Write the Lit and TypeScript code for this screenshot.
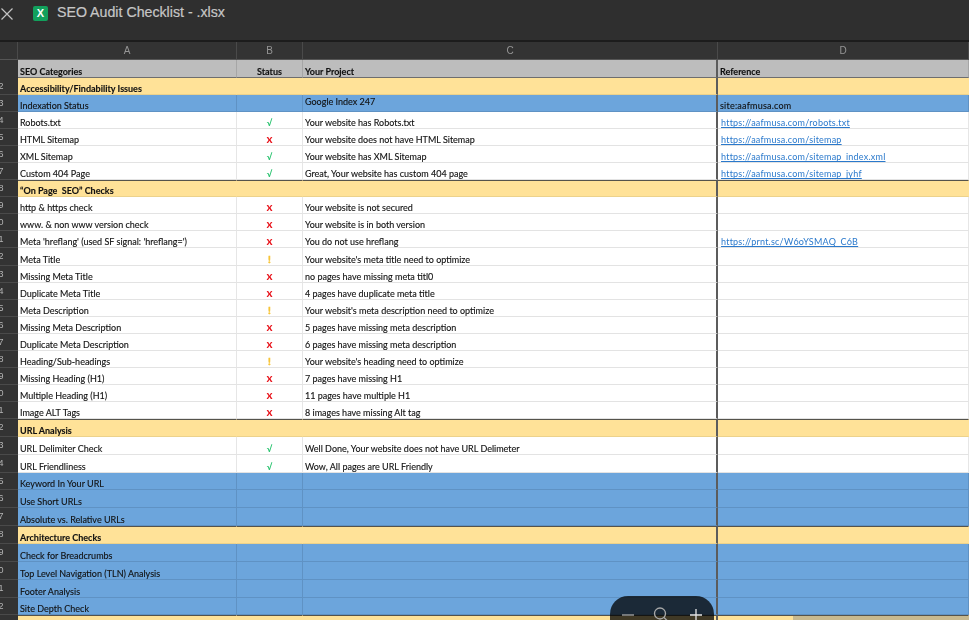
import {html, css, LitElement} from 'lit';
import {customElement} from 'lit/decorators.js';

type Kind = 'section' | 'blue' | 'plain';
type Mark = '' | 'ok' | 'bad' | 'warn';

interface Row {
	kind: Kind;
	a: string;
	mark?: Mark;
	c?: string;
	d?: string;
	link?: boolean;
	heavy?: boolean;
	tall?: boolean;
}

const glyph: Record<string, string> = {ok: '√', bad: 'x', warn: '!'};

const rows: Row[] = [
	{kind: 'section', a: 'Accessibility/Findability Issues'},
	{kind: 'blue', a: 'Indexation Status', c: 'Google Index 247', d: 'site:aafmusa.com'},
	{kind: 'plain', a: 'Robots.txt', mark: 'ok', c: 'Your website has Robots.txt', d: 'https://aafmusa.com/robots.txt', link: true},
	{kind: 'plain', a: 'HTML Sitemap', mark: 'bad', c: 'Your website does not have HTML Sitemap', d: 'https://aafmusa.com/sitemap', link: true},
	{kind: 'plain', a: 'XML Sitemap', mark: 'ok', c: 'Your website has XML Sitemap', d: 'https://aafmusa.com/sitemap_index.xml', link: true},
	{kind: 'plain', a: 'Custom 404 Page', mark: 'ok', c: 'Great, Your website has custom 404 page', d: 'https://aafmusa.com/sitemap_jyhf', link: true},
	{kind: 'section', a: '“On Page  SEO” Checks', heavy: true},
	{kind: 'plain', a: 'http & https check', mark: 'bad', c: 'Your website is not secured'},
	{kind: 'plain', a: 'www. & non www version check', mark: 'bad', c: 'Your website is in both version'},
	{kind: 'plain', a: "Meta 'hreflang' (used SF signal: 'hreflang=')", mark: 'bad', c: 'You do not use hreflang', d: 'https://prnt.sc/W6oYSMAQ_C6B', link: true},
	{kind: 'plain', a: 'Meta Title', mark: 'warn', c: "Your website's meta title need to optimize"},
	{kind: 'plain', a: 'Missing Meta Title', mark: 'bad', c: 'no pages have missing meta titl0'},
	{kind: 'plain', a: 'Duplicate Meta Title', mark: 'bad', c: '4 pages have duplicate meta title'},
	{kind: 'plain', a: 'Meta Description', mark: 'warn', c: "Your websit's meta description need to optimize"},
	{kind: 'plain', a: 'Missing Meta Description', mark: 'bad', c: '5 pages have missing meta description'},
	{kind: 'plain', a: 'Duplicate Meta Description', mark: 'bad', c: '6 pages have missing meta description'},
	{kind: 'plain', a: 'Heading/Sub-headings', mark: 'warn', c: "Your website's heading need to optimize"},
	{kind: 'plain', a: 'Missing Heading (H1)', mark: 'bad', c: '7 pages have missing H1'},
	{kind: 'plain', a: 'Multiple Heading (H1)', mark: 'bad', c: '11 pages have multiple H1'},
	{kind: 'plain', a: 'Image ALT Tags', mark: 'bad', c: '8 images have missing Alt tag'},
	{kind: 'section', a: 'URL Analysis', heavy: true, tall: true},
	{kind: 'plain', a: 'URL Delimiter Check', mark: 'ok', c: 'Well Done, Your website does not have URL Delimeter', tall: true},
	{kind: 'plain', a: 'URL Friendliness', mark: 'ok', c: 'Wow, All pages are URL Friendly', tall: true},
	{kind: 'blue', a: 'Keyword In Your URL', tall: true},
	{kind: 'blue', a: 'Use Short URLs', tall: true},
	{kind: 'blue', a: 'Absolute vs. Relative URLs', tall: true},
	{kind: 'section', a: 'Architecture Checks', heavy: true, tall: true},
	{kind: 'blue', a: 'Check for Breadcrumbs', tall: true},
	{kind: 'blue', a: 'Top Level Navigation (TLN) Analysis', tall: true},
	{kind: 'blue', a: 'Footer Analysis', tall: true},
	{kind: 'blue', a: 'Site Depth Check', tall: true},
	{kind: 'section', a: '', heavy: true},
];

@customElement('app-root')
export class AppRoot extends LitElement {
	static styles = css`
		:host {
			display: block;
			width: 969px;
			height: 620px;
			overflow: hidden;
			position: relative;
			background: #333;
			font-family: Lato, "Liberation Sans", sans-serif;
		}

		.titlebar {
			height: 42px;
			box-sizing: border-box;
			background: #2f2f2f;
			border-bottom: 2px solid #1c1c1c;
			display: flex;
			align-items: flex-start;
			padding: 4px 0 0 1px;
		}
		.close { width: 12px; height: 12px; margin-top: 4px; }
		.xl {
			width: 15px;
			height: 15px;
			margin: 2px 9px 0 20px;
			border-radius: 2px;
			background: #12a05c;
			color: #fff;
			font: bold 11px/15px "Liberation Sans", sans-serif;
			text-align: center;
		}
		.name {
			font: 14.2px/16px "Liberation Sans", sans-serif;
			-webkit-text-stroke: 0.2px #c6c6c6;
			color: #c6c6c6;
		}

		.sheet { filter: blur(0.4px); }
		.row {
			display: grid;
			grid-template-columns: 18px 219px 66px 415px 1fr;
			height: 17.05px;
			box-sizing: border-box;
			font-size: 9px;
			color: #111;
			-webkit-text-stroke: 0.12px #111;
		}
		.row.tall { height: 17.87px; }
		.row.letters {
			height: 18px;
			background: #333;
			color: #969696;
			-webkit-text-stroke: 0;
			font: 10px "Liberation Sans", sans-serif;
		}
		.letters > div {
			display: flex;
			align-items: center;
			justify-content: center;
			padding-bottom: 1px;
			box-sizing: border-box;
			border-right: 1px solid #4a4a4a;
			border-bottom: 1px solid #555;
		}
		.row.head { height: 18px; background: #bdbdbd; font-weight: 700; }
		.row.head > .cell { border-bottom: 1px solid #6e6e6e; border-right-color: #a6a6a6; padding-bottom: 0; }

		.cell {
			display: flex;
			align-items: flex-end;
			padding: 0 0 0 2px;
			white-space: pre;
			overflow: hidden;
			border-right: 1px solid #e6e6e6;
			border-bottom: 1px solid #e3e3e3;
			box-sizing: border-box;
			min-width: 0;
		}
		.cell.b { padding-left: 0; justify-content: center; font-weight: 700; }
		.cell.b.ok { font-size: 9px; -webkit-text-stroke: 0; }
		.cell.b.bad { font-size: 11.5px; line-height: 12px; -webkit-text-stroke: 0; }
		.cell.b.warn { font-size: 10px; -webkit-text-stroke: 0.5px #f7c436; }
		.cell.c { border-right: 2px solid #5c5c5c !important; }
		.cell.top { align-items: flex-start; padding-top: 1px; }
		.cell.d { overflow: visible; letter-spacing: 0.22px; }

		.num {
			background: #333;
			color: #b5b5b5;
			-webkit-text-stroke: 0;
			font: 9px/17px "Liberation Sans", sans-serif;
			display: flex;
			justify-content: flex-end;
			overflow: hidden;
			padding-right: 14.5px;
			box-sizing: border-box;
			border-bottom: 1px solid #4a4a4a;
		}
		.num.top { border: 0; }

		.plain { background: #fff; }
		.blue { background: #6ca5dc; }
		.blue .cell { border-right-color: #5f92c4; border-bottom-color: #5f92c4; }
		.section { background: #ffe298; font-weight: 700; }
		.section .cell { border-right-color: #ffe298; border-bottom-color: #ecd28c; }
		.heavy .cell { border-top: 1px solid #55534b; }

		.ok { color: #2cc471; }
		.bad { color: #e8141c; }
		.warn { color: #f7c436; }
		a { color: #2a79cc; -webkit-text-stroke: 0; text-decoration: underline; margin-left: 1px; }

		.zoom {
			position: absolute;
			left: 610px;
			top: 596px;
			width: 104px;
			height: 60px;
			border-radius: 18px;
			background: rgba(0, 0, 0, 0.75);
		}
		.zoom svg { position: absolute; left: 0; top: 0; }
		.thumb {
			position: absolute;
			left: 793px;
			right: 0;
			top: 616px;
			height: 4px;
			background: #c8b98f;
		}
	`;

	renderRow(r: Row, i: number) {
		const cls = ['row', r.kind, r.heavy ? 'heavy' : '', r.tall ? 'tall' : ''].join(' ');
		return html`<div class=${cls}>
			<div class="num">${i + 2}</div>
			<div class="cell">${r.a}</div>
			<div class="cell b ${r.mark ?? ''}">${r.mark ? glyph[r.mark] : ''}</div>
			<div class="cell c ${r.d && !r.link ? 'top' : ''}">${r.c ?? ''}</div>
			<div class="cell d">${r.link ? html`<a>${r.d}</a>` : r.d ?? ''}</div>
		</div>`;
	}

	render() {
		return html`
			<div class="titlebar">
				<svg class="close" viewBox="0 0 12 12" fill="none" stroke="#c4c4c4" stroke-width="1.2">
					<path d="M0.5 0.5 L11.5 11.5 M11.5 0.5 L0.5 11.5"></path>
				</svg>
				<div class="xl">X</div>
				<div class="name">SEO Audit Checklist - .xlsx</div>
			</div>
			<div class="sheet">
				<div class="row letters">
					<div></div><div>A</div><div>B</div><div>C</div><div>D</div>
				</div>
				<div class="row head">
					<div class="num top"></div>
					<div class="cell">SEO Categories</div>
					<div class="cell b">Status</div>
					<div class="cell c">Your Project</div>
					<div class="cell">Reference</div>
				</div>
				${rows.map((r, i) => this.renderRow(r, i))}
			</div>
			<div class="thumb"></div>
			<div class="zoom">
				<svg width="104" height="30" viewBox="0 0 104 30" fill="none" stroke="#a9a9a9" stroke-width="1.3">
					<path d="M12 19 H24"></path>
					<circle cx="50" cy="17.5" r="5.5"></circle>
					<path d="M54 21.5 L58 25.5"></path>
					<path d="M80 19 H92 M86 13 V25" stroke="#e6e6e6"></path>
				</svg>
			</div>
		`;
	}
}
